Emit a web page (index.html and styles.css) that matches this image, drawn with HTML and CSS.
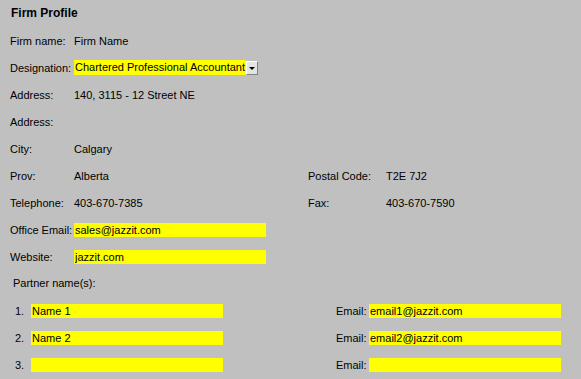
FILE: index.html
```html
<!DOCTYPE html>
<html lang="en">
<head>
    <meta charset="UTF-8">
    <meta name="viewport" content="width=device-width, initial-scale=1.0">
    <title>Firm Profile</title>
    <link rel="stylesheet" href="styles.css">
</head>
<body>
    <div class="profile">
        <h1 class="title">Firm Profile</h1>

        <div class="row">
            <span class="label">Firm name:</span>
            <span class="value">Firm Name</span>
        </div>

        <div class="row">
            <span class="label">Designation:</span>
            <span class="select">
                <span class="select-text">Chartered Professional Accountant</span>
                <span class="select-btn"><span class="arrow"></span></span>
            </span>
        </div>

        <div class="row">
            <span class="label">Address:</span>
            <span class="value">140, 3115 - 12 Street NE</span>
        </div>

        <div class="row">
            <span class="label">Address:</span>
            <span class="value"></span>
        </div>

        <div class="row">
            <span class="label">City:</span>
            <span class="value">Calgary</span>
        </div>

        <div class="row">
            <span class="label">Prov:</span>
            <span class="value">Alberta</span>
            <span class="label">Postal Code:</span>
            <span class="value">T2E 7J2</span>
        </div>

        <div class="row">
            <span class="label">Telephone:</span>
            <span class="value">403-670-7385</span>
            <span class="label">Fax:</span>
            <span class="value">403-670-7590</span>
        </div>

        <div class="row">
            <span class="label">Office Email:</span>
            <input class="field" type="text" value="sales@jazzit.com">
        </div>

        <div class="row">
            <span class="label">Website:</span>
            <input class="field" type="text" value="jazzit.com">
        </div>

        <div class="partner-head">Partner name(s):</div>

        <!-- partner rows -->
        <div class="partner-row">
            <span class="num">1.</span>
            <input class="field" type="text" value="Name 1">
            <span class="email-label">Email:</span>
            <input class="field" type="text" value="email1@jazzit.com">
        </div>

        <div class="partner-row">
            <span class="num">2.</span>
            <input class="field" type="text" value="Name 2">
            <span class="email-label">Email:</span>
            <input class="field" type="text" value="email2@jazzit.com">
        </div>

        <div class="partner-row">
            <span class="num">3.</span>
            <input class="field" type="text" value="">
            <span class="email-label">Email:</span>
            <input class="field" type="text" value="">
        </div>
    </div>
</body>
</html>
```

FILE: styles.css
```css
body { margin: 0; padding: 0; background-color: #c0c0c0; color: #000; font-family: "Liberation Sans", Arial, sans-serif; font-size: 11px; }

.profile { width: 581px; }

.title { margin: 0; padding: 6px 0 7px 11px; height: 14px; font-size: 12px; line-height: 14px; font-weight: bold; }

.row { display: grid; grid-template-columns: 64px 234px 78px auto; height: 27px; align-items: center; padding-left: 10px; line-height: 14px; }
.label, .value { white-space: nowrap; }

/* inputs */
.field {
    width: 192px;
    height: 14px;
    box-sizing: border-box;
    margin: 0;
    padding: 0 0 0 1px;
    border: none;
    background-color: #ffff00;
    color: #000;
    font-family: inherit;
    font-size: 11px;
    line-height: 14px;
    outline: none;
}

/* designation dropdown */
.select { display: flex; align-items: center; height: 15px; }
.select-text { background-color: #ffff00; height: 15px; line-height: 15px; padding-left: 1px; padding-right: 1px; white-space: nowrap; }
.select-btn {
    width: 12px;
    height: 14px;
    box-sizing: border-box;
    background-color: #e4e4e4;
    border-top: 1px solid #fff;
    border-left: 1px solid #fff;
    border-right: 1px solid #808080;
    border-bottom: 1px solid #808080;
    display: flex;
    align-items: center;
    justify-content: center;
}
.arrow { width: 0; height: 0; border-left: 3px solid transparent; border-right: 3px solid transparent; border-top: 3px solid #000; margin-top: 1px; }

.partner-head { height: 27px; line-height: 27px; padding-left: 13px; }

.partner-row { display: grid; grid-template-columns: 16px 305px 33px 192px; height: 27px; align-items: center; padding-left: 15px; line-height: 14px; }
.num, .email-label { white-space: nowrap; }
```
